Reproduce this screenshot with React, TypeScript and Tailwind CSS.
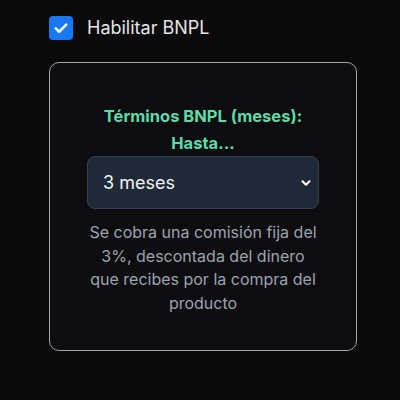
import { ChevronDown } from 'lucide-react';

const App = () => {
  return (
    <div className="min-h-[400px] w-[400px] bg-[#0a0a0a] pl-[49px] pt-[15px] font-['Inter',sans-serif]">
      <label className="flex items-center gap-[14px]">
        <span className="flex h-[24px] w-[24px] items-center justify-center rounded-[4px] bg-[#1877f2]">
          <svg viewBox="0 0 24 24" className="h-[18px] w-[18px]" fill="none" stroke="white" strokeWidth="3.4" strokeLinecap="round" strokeLinejoin="round">
            <path d="M5 12.5l4.5 4.5L19 7.5" />
          </svg>
        </span>
        <span className="text-[18px] leading-[26px] text-[#e5e5e5]">Habilitar BNPL</span>
      </label>

      <div className="mt-[21px] w-[308px] rounded-[10px] border border-[#a3a3a8] bg-[#0d0d10] px-[37px] pt-[40px] pb-[35px]">
        <p className="text-center text-[16.5px] font-bold leading-[27px] text-[#5fdaa9]">
          Términos BNPL (meses):
          <br />
          Hasta...
        </p>
        <div className="relative mt-[-1px] flex h-[53px] items-center rounded-[8px] border border-[#374151] bg-[#1f2937] pl-[15px] pr-[5px]">
          <span className="flex-1 text-[18px] text-[#f3f4f6]">3 meses</span>
          <ChevronDown className="h-[14px] w-[14px] text-white" strokeWidth={3.5} />
        </div>
        <p className="mt-[12px] text-center text-[16px] leading-[23.5px] text-[#9ca3af]">
          Se cobra una comisión fija del 3%, descontada del dinero que recibes por la compra del producto
        </p>
      </div>
    </div>
  );
};

export default App;
